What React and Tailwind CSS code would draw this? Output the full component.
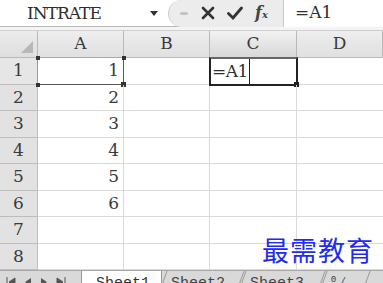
import React from "react";

const cols = ["A", "B", "C", "D"];
const rows = [1, 2, 3, 4, 5, 6, 7, 8];

const App = () => {
  return (
    <div className="w-[383px] h-[283px] overflow-hidden bg-white text-[#3a3a3a] [font-family:'DejaVu_Serif',serif] relative">
      {/* Formula bar */}
      <div className="h-[27px] flex items-center border-b border-[#b8b8b8]">
        <div className="w-[140px] pl-[27px] text-[17px] leading-none tracking-[-1px] text-[#2e2e2e] whitespace-nowrap">INTRATE</div>
        <div className="w-[28px] flex justify-center">
          <svg width="8" height="5" viewBox="0 0 8 5"><path d="M0 0h8L4 5z" fill="#333" /></svg>
        </div>
        <div className="h-[27px] flex-1 flex items-center bg-[#ececec] rounded-l-[14px] border-l border-[#d0d0d0]">
          <div className="w-[30px] flex justify-center">
            <div className="w-[8px] h-[3px] rounded bg-[#c4c4c4]" />
          </div>
          <svg width="14" height="14" viewBox="0 0 14 14" className="ml-[2px]">
            <path d="M2 2L12 12M12 2L2 12" stroke="#333" strokeWidth="2.6" strokeLinecap="round" />
          </svg>
          <svg width="16" height="14" viewBox="0 0 16 14" className="ml-[12px]">
            <path d="M1.5 7.5L6 12L14.5 2" stroke="#333" strokeWidth="2.8" fill="none" strokeLinecap="round" />
          </svg>
          <span className="ml-[12px] text-[16px] italic font-bold text-[#444] leading-none">f<span className="text-[10px]">x</span></span>
        </div>
        <div className="h-[27px] w-[100px] border-l border-[#c8c8c8] bg-white flex items-center pl-[11px] text-[17px] text-[#2e2e2e]">=A1</div>
      </div>
      <div className="h-[4px] bg-[#f4f4f4] border-b border-[#cfcfcf]" />

      {/* Grid */}
      <div className="grid grid-cols-[38px_86px_86px_87px_86px]">
        {/* header row */}
        <div className="h-[27px] bg-gradient-to-b from-[#ececec] to-[#dedede] border-r border-b border-[#b9b9b9] flex items-end justify-end p-[4px]">
          <svg width="12" height="12" viewBox="0 0 12 12"><path d="M12 0V12H0z" fill="#b8b8b8" /></svg>
        </div>
        {cols.map((c) => (
          <div
            key={c}
            className={`h-[27px] border-r border-b border-[#b9b9b9] flex items-center justify-center text-[17px] ${
              c === "C" ? "bg-gradient-to-b from-[#f2f2f2] to-[#d8d8d8]" : "bg-gradient-to-b from-[#eeeeee] to-[#e0e0e0]"
            }`}
          >
            {c}
          </div>
        ))}

        {rows.map((r) => (
          <React.Fragment key={r}>
            <div
              className={`h-[26.5px] border-r border-b border-[#bdbdbd] flex items-center justify-center text-[17px] ${
                r === 1 ? "bg-[#e6e6e6]" : "bg-[#e2e2e2]"
              }`}
            >
              {r}
            </div>
            <div className="h-[26.5px] border-r border-b border-[#dadada] flex items-center justify-end pr-[4px] text-[17px] relative">
              {r <= 6 ? r : ""}
              {r === 1 && (
                <div className="absolute -left-[1px] -top-[1px] w-[87px] h-[28px] border border-[#555] border-l-[#999] border-t-[#aaa]">
                  <div className="absolute -left-[2px] -top-[2px] w-[4px] h-[4px] bg-[#333]" />
                  <div className="absolute -right-[3px] -top-[2px] w-[4px] h-[4px] bg-[#333]" />
                  <div className="absolute -left-[2px] -bottom-[3px] w-[4px] h-[4px] bg-[#333]" />
                  <div className="absolute -right-[3px] -bottom-[3px] w-[5px] h-[5px] bg-[#333]" />
                </div>
              )}
            </div>
            <div className="h-[26.5px] border-r border-b border-[#dadada]" />
            <div className="h-[26.5px] border-r border-b border-[#dadada] relative">
              {r === 1 && (
                <div className="absolute -left-[1px] -top-[1px] w-[89px] h-[29px] border-2 border-[#222] border-t-[#666] flex items-center text-[17px] text-[#2e2e2e]">
                  <span className="pl-[1px] whitespace-nowrap tracking-[-0.5px]">=A1</span>
                  <div className="w-[1px] h-[25px] bg-[#222] ml-[1px]" />
                  <div className="absolute -right-[3px] -bottom-[3px] w-[5px] h-[5px] bg-[#222]" />
                </div>
              )}
            </div>
            <div className="h-[26.5px] border-b border-[#dadada]" />
          </React.Fragment>
        ))}
      </div>

      {/* Watermark */}
      <div className="absolute left-[262px] top-[236px] whitespace-nowrap text-[27px] leading-none tracking-[1px] text-[#1e2cf0] [font-family:'Noto_Sans_CJK_SC',sans-serif]">
        最需教育
      </div>

      {/* Sheet tabs */}
      <div className="h-[14px] flex items-start bg-[#d9d9d9] border-t border-[#a8a8a8] [font-family:'Liberation_Mono',monospace] text-[15px] leading-none overflow-hidden">
        <div className="w-[82px] h-[14px] flex items-center gap-[8px] pl-[6px] pt-[6px] border-r border-[#999]">
          <svg width="10" height="10" viewBox="0 0 10 10"><path d="M1 1v9M9 2L3 6l6 4z" stroke="#555" fill="#555" /></svg>
          <svg width="8" height="10" viewBox="0 0 8 10"><path d="M7 2L1 6l6 4z" fill="#555" /></svg>
          <svg width="8" height="10" viewBox="0 0 8 10"><path d="M1 2l6 4-6 4z" fill="#555" /></svg>
          <svg width="10" height="10" viewBox="0 0 10 10"><path d="M9 1v9M1 2l6 4-6 4z" stroke="#555" fill="#555" /></svg>
        </div>
        <div className="w-[80px] h-[14px] bg-white pl-[14px] pt-[5px] text-[#333] border-r border-[#999]">Sheet1</div>
        <div className="w-[78px] h-[14px] ml-[2px] pl-[8px] pt-[5px] text-[#444] border-l border-r border-[#999] -skew-x-[20deg]">
          <div className="skew-x-[20deg]">Sheet2</div>
        </div>
        <div className="w-[80px] h-[14px] ml-[1px] pl-[8px] pt-[5px] text-[#444] border-l border-r border-[#999] -skew-x-[20deg]">
          <div className="skew-x-[20deg]">Sheet3</div>
        </div>
        <div className="w-[44px] h-[14px] ml-[1px] pl-[6px] pt-[5px] text-[#444] border-l border-r border-[#999] -skew-x-[20deg]">
          <div className="skew-x-[20deg]">⁰⁄</div>
        </div>
      </div>
    </div>
  );
};

export default App;
